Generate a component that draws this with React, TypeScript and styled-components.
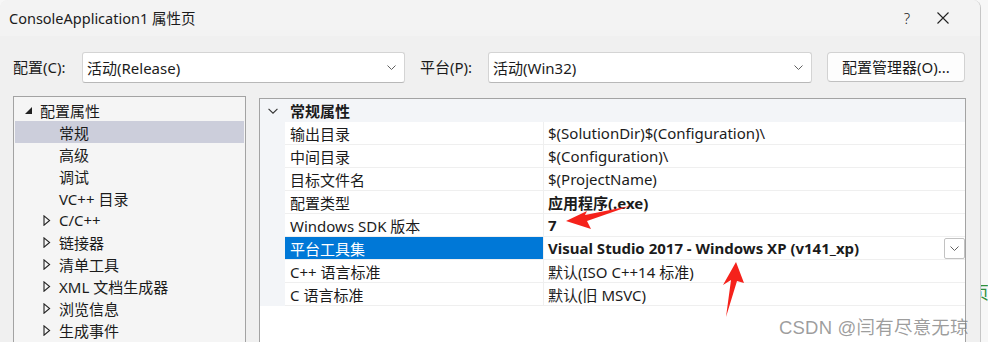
import React from 'react'
import styled, { createGlobalStyle } from 'styled-components'

const GlobalStyle = createGlobalStyle`
  html, body {
    margin: 0;
    padding: 0;
    background: #f7f7f7;
  }
  body {
    font-family: 'Noto Sans', 'Noto Sans CJK SC', sans-serif;
    font-size: 15px;
    color: #1b1b1b;
  }
`

const Screen = styled.div`
  position: relative;
  display: flex;
  height: 342px;
  width: 988px;
  overflow: hidden;
`

const Window = styled.div`
  width: 980px;
  flex: none;
  display: flex;
  flex-direction: column;
  background: #f0f0f0;
  border-right: 1px solid #c6c6c6;
  border-radius: 8px 8px 0 0;
  overflow: hidden;
`

const TitleBar = styled.div`
  height: 36px;
  flex: none;
  display: flex;
  align-items: center;
  background: #f3f3f3;
  padding-left: 9px;
`

const Title = styled.div`
  flex: 1;
  font-size: 14.5px;
  line-height: 20px;
`

const TitleButton = styled.div<{ $w: number }>`
  width: ${({ $w }) => $w}px;
  height: 36px;
  display: flex;
  align-items: center;
  justify-content: center;
  font-size: 15px;
  font-weight: 300;
  color: #222;
`

const Toolbar = styled.div`
  display: flex;
  align-items: center;
  padding: 15px 0 0 13px;
  height: 31px;
`

const FieldLabel = styled.div<{ $w: number }>`
  width: ${({ $w }) => $w}px;
  flex: none;
`

const Combo = styled.div<{ $w: number }>`
  width: ${({ $w }) => $w}px;
  height: 31px;
  box-sizing: border-box;
  margin-top: 2px;
  flex: none;
  display: flex;
  align-items: center;
  justify-content: space-between;
  padding: 0 8px 0 4px;
  background: #ffffff;
  border: 1px solid #d4d4d4;
  border-bottom-color: #b8b8b8;
  border-radius: 3px;
`

const Gap = styled.div<{ $w: number }>`
  width: ${({ $w }) => $w}px;
  flex: none;
`

const Button = styled.div`
  width: 138px;
  height: 30px;
  box-sizing: border-box;
  flex: none;
  display: flex;
  align-items: center;
  justify-content: center;
  background: #fdfdfd;
  border: 1px solid #d2d2d2;
  border-bottom-color: #c0c0c0;
  border-radius: 4px;
`

const Panels = styled.div`
  flex: 1;
  display: flex;
  align-items: flex-start;
  gap: 13px;
  padding: 14px 0 0 13px;
`

const Tree = styled.div`
  width: 233px;
  height: 260px;
  box-sizing: border-box;
  flex: none;
  padding: 2px 1px;
  background: #f5f5f5;
  border: 1px solid #a3a3a3;
`

const TreeItem = styled.div<{ $level: number; $selected?: boolean }>`
  height: 22px;
  display: flex;
  align-items: center;
  padding-left: ${({ $level }) => 7 + $level * 19}px;
  background: ${({ $selected }) => ($selected ? '#cccedb' : 'transparent')};
`

const Expander = styled.div`
  width: 16px;
  height: 22px;
  flex: none;
  display: flex;
  align-items: center;
  padding-left: 2px;
  box-sizing: border-box;
`

const TreeText = styled.span`
  margin-left: 2px;
  white-space: nowrap;
`

const Grid = styled.div`
  width: 707px;
  height: 260px;
  box-sizing: border-box;
  margin-top: 2px;
  flex: none;
  background: #ffffff;
  border: 1px solid #a3a3a3;
`

const GridRow = styled.div`
  display: grid;
  grid-template-columns: 25px 259px 1fr;
  height: 23px;
`

const Gutter = styled.div`
  background: #f3f5f8;
  display: flex;
  align-items: center;
  justify-content: center;
  padding-left: 1px;
`

const HeaderCell = styled.div`
  grid-column: 2 / 4;
  background: #f3f5f8;
  display: flex;
  align-items: center;
  padding-left: 5px;
  font-weight: 700;
`

const NameCell = styled.div<{ $selected?: boolean }>`
  display: flex;
  align-items: center;
  padding-left: 5px;
  white-space: nowrap;
  box-sizing: border-box;
  border-bottom: 1px solid #efefef;
  border-right: 1px solid #efefef;
  background: ${({ $selected }) => ($selected ? '#0078d7' : '#ffffff')};
  color: ${({ $selected }) => ($selected ? '#ffffff' : '#1b1b1b')};
`

const ValueCell = styled.div<{ $bold?: boolean }>`
  display: flex;
  align-items: center;
  justify-content: space-between;
  padding-left: 4px;
  white-space: nowrap;
  box-sizing: border-box;
  border-bottom: 1px solid #efefef;
  font-weight: ${({ $bold }) => ($bold ? 700 : 400)};
`

const CellDrop = styled.div`
  width: 21px;
  height: 21px;
  box-sizing: border-box;
  display: flex;
  align-items: center;
  justify-content: center;
  background: #ffffff;
  border: 1px solid #c2c2c2;
  border-radius: 2px;
`

const Outside = styled.div`
  flex: 1;
  display: flex;
  align-items: flex-start;
  overflow: hidden;
  padding-top: 279px;
`

const GreenGlyph = styled.span`
  margin-left: -9px;
  font-size: 17px;
  color: #2f8f3a;
`

const Overlay = styled.svg`
  position: absolute;
  left: 0;
  top: 0;
  pointer-events: none;
`

const Watermark = styled.div`
  position: absolute;
  left: 779px;
  top: 313px;
  font-family: 'Liberation Sans', 'Noto Sans CJK SC', sans-serif;
  font-size: 18.5px;
  color: rgba(120, 120, 120, 0.72);
  white-space: nowrap;
  letter-spacing: 0.2px;
`

const Chevron = ({ w = 9, color = '#606060' }: { w?: number; color?: string }) => (
  <svg width={w} height={Math.round(w / 1.8)} viewBox="0 0 9 5">
    <path d="M0.5 0.5 L4.5 4.5 L8.5 0.5" fill="none" stroke={color} strokeWidth="1" />
  </svg>
)

const Collapsed = () => (
  <svg width="8" height="11" viewBox="0 0 8 11">
    <path d="M1 0.8 L6.6 5.5 L1 10.2 Z" fill="none" stroke="#222" strokeWidth="1.1" />
  </svg>
)

const Expanded = () => (
  <svg width="9" height="9" viewBox="0 0 9 9">
    <path d="M8 1 L8 8 L1 8 Z" fill="#222" />
  </svg>
)

const treeItems = [
  { text: '配置属性', level: 0, icon: 'open' },
  { text: '常规', level: 1, selected: true },
  { text: '高级', level: 1 },
  { text: '调试', level: 1 },
  { text: 'VC++ 目录', level: 1 },
  { text: 'C/C++', level: 1, icon: 'closed' },
  { text: '链接器', level: 1, icon: 'closed' },
  { text: '清单工具', level: 1, icon: 'closed' },
  { text: 'XML 文档生成器', level: 1, icon: 'closed' },
  { text: '浏览信息', level: 1, icon: 'closed' },
  { text: '生成事件', level: 1, icon: 'closed' },
]

const props = [
  { name: '输出目录', value: '$(SolutionDir)$(Configuration)\\' },
  { name: '中间目录', value: '$(Configuration)\\' },
  { name: '目标文件名', value: '$(ProjectName)' },
  { name: '配置类型', value: '应用程序(.exe)', bold: true },
  { name: 'Windows SDK 版本', value: '7', bold: true },
  { name: '平台工具集', value: 'Visual Studio 2017 - Windows XP (v141_xp)', bold: true, selected: true },
  { name: 'C++ 语言标准', value: '默认(ISO C++14 标准)' },
  { name: 'C 语言标准', value: '默认(旧 MSVC)' },
]

export default function App() {
  return (
    <>
      <GlobalStyle />
      <Screen>
        <Window>
          <TitleBar>
            <Title>ConsoleApplication1 属性页</Title>
            <TitleButton $w={26}>?</TitleButton>
            <TitleButton $w={46}>
              <svg width="12" height="12" viewBox="0 0 12 12">
                <path d="M0.5 0.5 L11.5 11.5 M11.5 0.5 L0.5 11.5" stroke="#222" strokeWidth="1.1" />
              </svg>
            </TitleButton>
            <Gap $w={14} />
          </TitleBar>

          <Toolbar>
            <FieldLabel $w={69}>配置(C):</FieldLabel>
            <Combo $w={323}>
              <span>活动(Release)</span>
              <Chevron />
            </Combo>
            <Gap $w={15} />
            <FieldLabel $w={68}>平台(P):</FieldLabel>
            <Combo $w={324}>
              <span>活动(Win32)</span>
              <Chevron />
            </Combo>
            <Gap $w={15} />
            <Button>配置管理器(O)...</Button>
          </Toolbar>

          <Panels>
            <Tree>
              {treeItems.map((item) => (
                <TreeItem key={item.text} $level={item.level} $selected={item.selected}>
                  <Expander>
                    {item.icon === 'open' && <Expanded />}
                    {item.icon === 'closed' && <Collapsed />}
                  </Expander>
                  <TreeText>{item.text}</TreeText>
                </TreeItem>
              ))}
            </Tree>

            <Grid>
              <GridRow>
                <Gutter>
                  <Chevron w={10} color="#333" />
                </Gutter>
                <HeaderCell>常规属性</HeaderCell>
              </GridRow>
              {props.map((p) => (
                <GridRow key={p.name}>
                  <Gutter />
                  <NameCell $selected={p.selected}>{p.name}</NameCell>
                  <ValueCell $bold={p.bold}>
                    <span>{p.value}</span>
                    {p.selected && (
                      <CellDrop>
                        <Chevron w={9} />
                      </CellDrop>
                    )}
                  </ValueCell>
                </GridRow>
              ))}
            </Grid>
          </Panels>
        </Window>

        <Outside>
          <GreenGlyph>页</GreenGlyph>
        </Outside>

        <Overlay width="988" height="342" viewBox="0 0 988 342">
          <polygon points="566,221 587,211 585,215 630,206 587,221 591,229" fill="#f5221b" />
          <polygon points="736,262 744,283 737,281 726,317 731,280 723,285" fill="#f5221b" />
        </Overlay>
        <Watermark>CSDN @闫有尽意无琼</Watermark>
      </Screen>
    </>
  )
}
